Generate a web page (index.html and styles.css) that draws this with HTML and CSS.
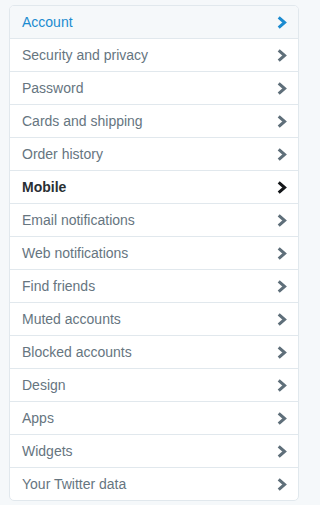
FILE: index.html
```html
<!DOCTYPE html>
<html>
<head>
<meta charset="utf-8">
<link rel="stylesheet" href="styles.css">
</head>
<body>
<ul class="menu">
  <li class="item active"><span>Account</span><svg class="chev" viewBox="0 0 10 13"><path d="M1.7 1.4 L7.6 6.5 L1.7 11.6"/></svg></li>
  <li class="item"><span>Security and privacy</span><svg class="chev" viewBox="0 0 10 13"><path d="M1.7 1.4 L7.6 6.5 L1.7 11.6"/></svg></li>
  <li class="item"><span>Password</span><svg class="chev" viewBox="0 0 10 13"><path d="M1.7 1.4 L7.6 6.5 L1.7 11.6"/></svg></li>
  <li class="item"><span>Cards and shipping</span><svg class="chev" viewBox="0 0 10 13"><path d="M1.7 1.4 L7.6 6.5 L1.7 11.6"/></svg></li>
  <li class="item"><span>Order history</span><svg class="chev" viewBox="0 0 10 13"><path d="M1.7 1.4 L7.6 6.5 L1.7 11.6"/></svg></li>
  <li class="item current"><span>Mobile</span><svg class="chev" viewBox="0 0 10 13"><path d="M1.7 1.4 L7.6 6.5 L1.7 11.6"/></svg></li>
  <li class="item"><span>Email notifications</span><svg class="chev" viewBox="0 0 10 13"><path d="M1.7 1.4 L7.6 6.5 L1.7 11.6"/></svg></li>
  <li class="item"><span>Web notifications</span><svg class="chev" viewBox="0 0 10 13"><path d="M1.7 1.4 L7.6 6.5 L1.7 11.6"/></svg></li>
  <li class="item"><span>Find friends</span><svg class="chev" viewBox="0 0 10 13"><path d="M1.7 1.4 L7.6 6.5 L1.7 11.6"/></svg></li>
  <li class="item"><span>Muted accounts</span><svg class="chev" viewBox="0 0 10 13"><path d="M1.7 1.4 L7.6 6.5 L1.7 11.6"/></svg></li>
  <li class="item"><span>Blocked accounts</span><svg class="chev" viewBox="0 0 10 13"><path d="M1.7 1.4 L7.6 6.5 L1.7 11.6"/></svg></li>
  <li class="item"><span>Design</span><svg class="chev" viewBox="0 0 10 13"><path d="M1.7 1.4 L7.6 6.5 L1.7 11.6"/></svg></li>
  <li class="item"><span>Apps</span><svg class="chev" viewBox="0 0 10 13"><path d="M1.7 1.4 L7.6 6.5 L1.7 11.6"/></svg></li>
  <li class="item"><span>Widgets</span><svg class="chev" viewBox="0 0 10 13"><path d="M1.7 1.4 L7.6 6.5 L1.7 11.6"/></svg></li>
  <li class="item"><span>Your Twitter data</span><svg class="chev" viewBox="0 0 10 13"><path d="M1.7 1.4 L7.6 6.5 L1.7 11.6"/></svg></li>
</ul>
</body>
</html>
```
FILE: styles.css
```css
html, body {
  margin: 0;
  padding: 0;
  background: #f5f8fa;
}
body {
  padding: 5px 0 0 9px;
  font-family: "Liberation Sans", Arial, sans-serif;
}
.menu {
  list-style: none;
  margin: 0;
  padding: 0;
  width: 288px;
  background: #fff;
  border: 1px solid #e1e8ed;
  border-radius: 5px;
  overflow: hidden;
}
.item {
  display: flex;
  align-items: center;
  justify-content: space-between;
  height: 32px;
  padding: 0 11px 0 12px;
  border-bottom: 1px solid #e1e8ed;
  font-size: 14px;
  color: #66757f;
}
.item:last-child {
  border-bottom: none;
}
.chev {
  width: 10px;
  height: 13px;
  margin-top: 1px;
  fill: none;
  stroke: #5f6f7a;
  stroke-width: 3;
  stroke-linecap: butt;
  stroke-linejoin: miter;
}
.active {
  background: #f5f8fa;
  color: #1b8bd0;
}
.active .chev {
  stroke: #1b8bd0;
}
.current {
  color: #292f33;
  font-weight: bold;
}
.current .chev {
  stroke: #14171a;
}
```
